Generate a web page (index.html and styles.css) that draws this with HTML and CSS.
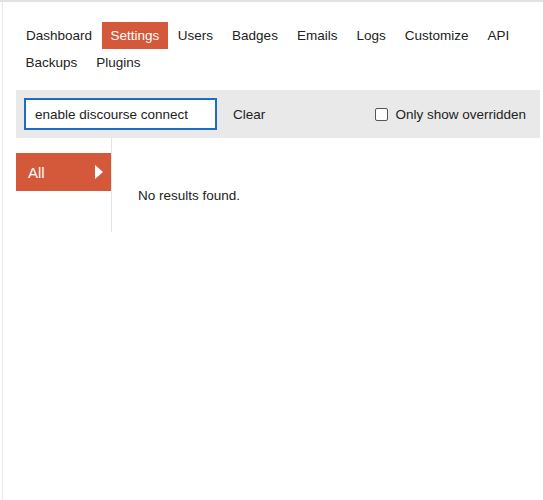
FILE: index.html
```html
<!DOCTYPE html>
<html>
<head>
<meta charset="utf-8">
<link rel="stylesheet" href="styles.css">
</head>
<body>
<div class="frame">
  <nav class="admin-nav">
    <a class="nav-item">Dashboard</a>
    <a class="nav-item active">Settings</a>
    <a class="nav-item">Users</a>
    <a class="nav-item">Badges</a>
    <a class="nav-item">Emails</a>
    <a class="nav-item">Logs</a>
    <a class="nav-item">Customize</a>
    <a class="nav-item">API</a>
    <a class="nav-item">Backups</a>
    <a class="nav-item">Plugins</a>
  </nav>
  <div class="filter-bar">
    <input class="search" type="text" value="enable discourse connect">
    <span class="clear">Clear</span>
    <label class="toggle"><span class="box"></span>Only show overridden</label>
  </div>
  <div class="body-area">
    <div class="side">
      <div class="side-item">All<span class="arrow"></span></div>
    </div>
    <div class="results">No results found.</div>
  </div>
</div>
</body>
</html>
```
FILE: styles.css
```css
html, body {
  margin: 0;
  padding: 0;
  background: #fff;
}
body {
  font-family: "Liberation Sans", Arial, sans-serif;
  font-size: 13.5px;
  color: #222;
  height: 500px;
  overflow: hidden;
}
.frame {
  height: 500px;
  border-top: 2px solid #e2e2e2;
  box-shadow: inset 2px 0 0 #fff, inset 3px 0 0 #e8e8e8;
  box-sizing: border-box;
  padding: 20px 3px 0 16px;
}
.admin-nav {
  display: flex;
  flex-wrap: wrap;
  width: 524px;
}
.nav-item {
  display: block;
  padding: 0 9.5px;
  height: 27px;
  line-height: 27px;
  color: #222;
  font-size: 13.5px;
}
.nav-item:first-child {
  padding-left: 10px;
}
.nav-item.active {
  background: #d4583a;
  color: #fff;
  padding: 0 9px;
}
.filter-bar {
  margin-top: 14px;
  width: 524px;
  height: 48px;
  background: #e9e9e9;
  display: flex;
  align-items: center;
  padding: 0 14px 0 8px;
  box-sizing: border-box;
}
.search {
  width: 193px;
  height: 32px;
  box-sizing: border-box;
  border: 2px solid #1b6ec2;
  background: #fff;
  padding: 0 9px;
  font-family: "Liberation Sans", Arial, sans-serif;
  font-size: 13.5px;
  color: #222;
  outline: none;
  margin: 0;
}
.clear {
  margin-left: 16px;
  font-size: 13.5px;
}
.toggle {
  margin-left: auto;
  display: flex;
  align-items: center;
  font-size: 13.5px;
}
.box {
  width: 11px;
  height: 11px;
  border: 1px solid #555;
  border-radius: 2px;
  background: #fff;
  margin-right: 7px;
}
.body-area {
  display: flex;
}
.side {
  width: 95px;
  height: 79px;
  border-right: 1px solid #e4e4e4;
  padding-top: 15px;
}
.side-item {
  height: 38px;
  background: #d4583a;
  color: #fff;
  font-size: 15px;
  display: flex;
  align-items: center;
  padding: 0 8px 0 12px;
  justify-content: space-between;
}
.arrow {
  width: 0;
  height: 0;
  border-top: 7px solid transparent;
  border-bottom: 7px solid transparent;
  border-left: 8px solid #fff;
}
.results {
  padding: 50px 0 0 26px;
  font-size: 13.5px;
}
```
